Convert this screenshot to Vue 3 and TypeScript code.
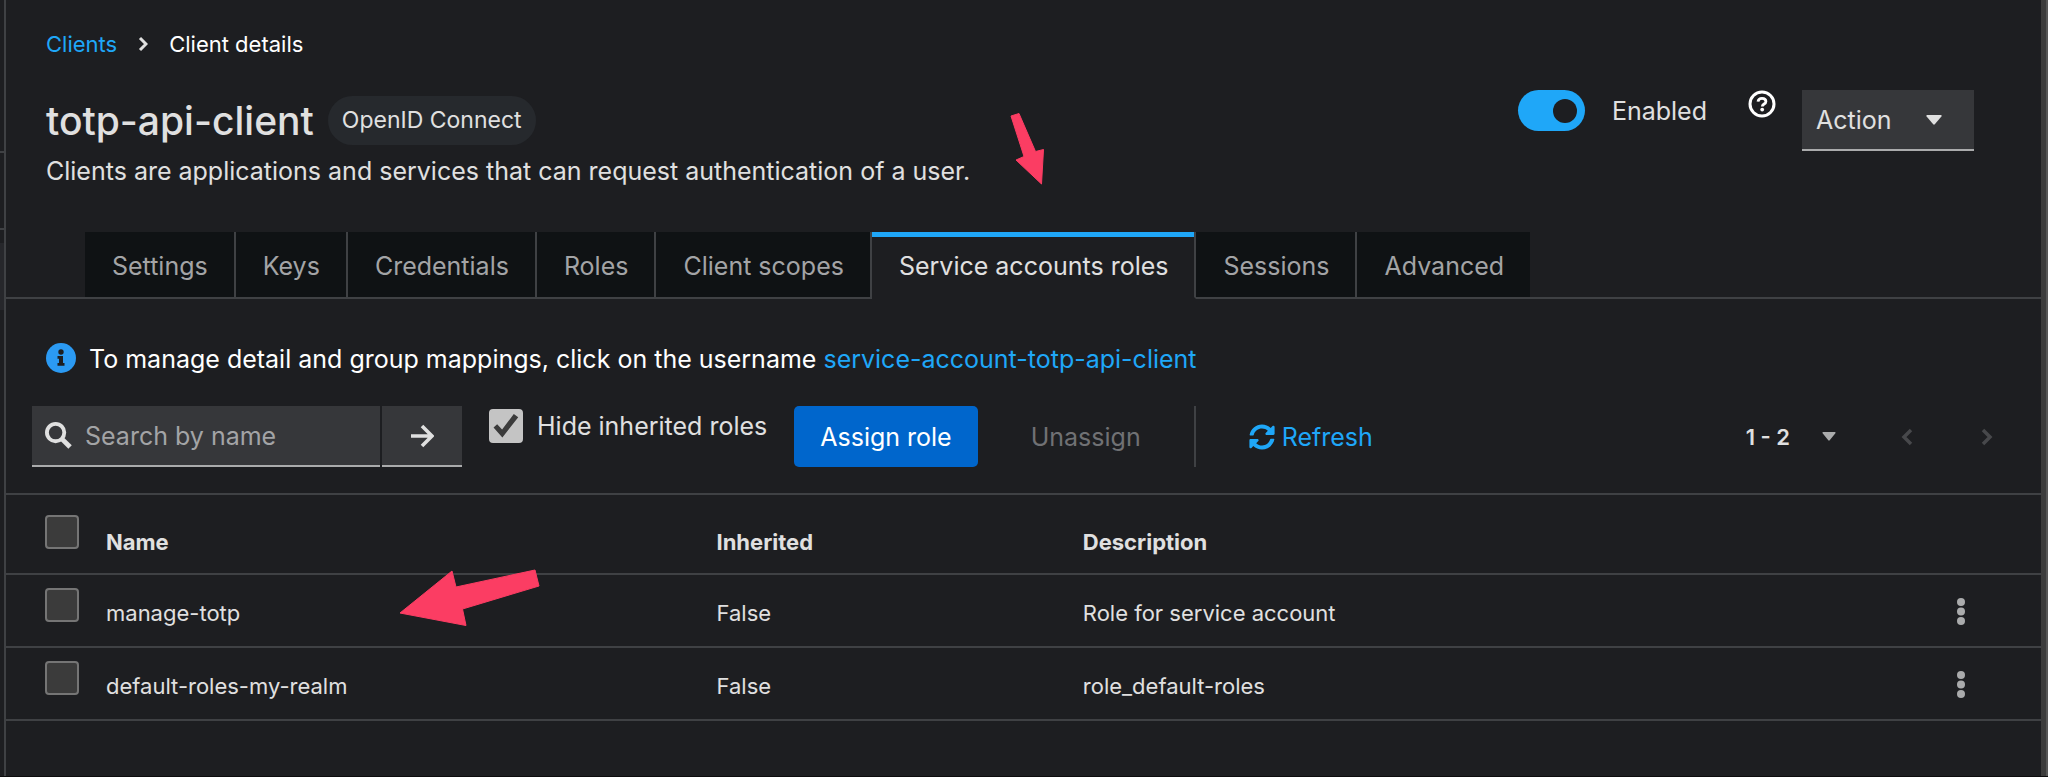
<script setup lang="ts">
import { ref } from 'vue'

interface Role {
  name: string
  inherited: string
  description: string
}

const tabs: string[] = [
  'Settings',
  'Keys',
  'Credentials',
  'Roles',
  'Client scopes',
  'Service accounts roles',
  'Sessions',
  'Advanced',
]
const activeTab = ref('Service accounts roles')
const enabled = ref(true)
const hideInherited = ref(true)
const search = ref('')
const selected = ref<string[]>([])

const roles: Role[] = [
  { name: 'manage-totp', inherited: 'False', description: 'Role for service account' },
  { name: 'default-roles-my-realm', inherited: 'False', description: 'role_default-roles' },
]
</script>

<template>
  <div class="shell">
    <aside class="rail" aria-hidden="true">
      <div class="rail-top"></div>
      <div class="rail-item"></div>
      <div class="rail-current"></div>
    </aside>

    <main class="page">
      <header class="head">
        <div class="intro">
          <nav class="crumbs" aria-label="Breadcrumb">
            <a href="#clients">Clients</a>
            <svg class="crumb-sep" viewBox="0 0 10 16" aria-hidden="true">
              <path d="M2 2l6 6-6 6" fill="none" stroke="currentColor" stroke-width="3" />
            </svg>
            <span>Client details</span>
          </nav>
          <div class="title-row">
            <h1>totp-api-client</h1>
            <span class="pill">OpenID Connect</span>
          </div>
          <p class="lead">Clients are applications and services that can request authentication of a user.</p>
        </div>
        <div class="controls">
          <label class="switch">
            <input v-model="enabled" type="checkbox" role="switch" />
            <span>Enabled</span>
          </label>
          <button class="help" type="button" aria-label="Help">
            <svg viewBox="0 0 28 28" aria-hidden="true">
              <circle cx="14" cy="14" r="12" fill="none" stroke="currentColor" stroke-width="3" />
              <path d="M10 11.6c.3-2.2 1.8-3.3 4-3.3s3.9 1.2 3.9 3.1c0 2.7-3.6 2.5-3.6 5" fill="none" stroke="currentColor" stroke-width="2.8" />
              <circle cx="14.2" cy="19.6" r="1.9" fill="currentColor" />
            </svg>
          </button>
          <button class="action" type="button">
            <span>Action</span>
            <svg class="caret" viewBox="0 0 16 10" aria-hidden="true"><path d="M1 0h14q1 .5.4 1.400L8.800 9.300q-.8.800-1.600 0L.6 1.400Q0 .5 1 0z" fill="currentColor" /></svg>
          </button>
        </div>
      </header>

      <div class="tabs" role="tablist">
        <button
          v-for="tab in tabs"
          :key="tab"
          type="button"
          role="tab"
          class="tab"
          :class="{ active: tab === activeTab }"
          :aria-selected="tab === activeTab"
          @click="activeTab = tab"
        >{{ tab }}</button>
      </div>

      <div class="info">
        <svg viewBox="0 0 30 30" aria-hidden="true">
          <circle cx="15" cy="15" r="15" fill="#2b9af3" />
          <circle cx="15" cy="9" r="2.700" fill="#1d1e21" />
          <path d="M11.500 13h5.500v7h1.500v2.800h-7V20H13v-4.200h-1.500z" fill="#1d1e21" />
        </svg>
        <span>To manage detail and group mappings, click on the username <a href="#user">service-account-totp-api-client</a></span>
      </div>

      <div class="toolbar">
        <form class="search" @submit.prevent>
          <label class="field">
            <svg viewBox="0 0 28 28" aria-hidden="true">
              <circle cx="11" cy="11" r="9" fill="none" stroke="currentColor" stroke-width="4" />
              <path d="M18 18l8 8" stroke="currentColor" stroke-width="5" />
            </svg>
            <input v-model="search" type="text" placeholder="Search by name" aria-label="Search by name" />
          </label>
          <button class="go" type="submit" aria-label="Search">
            <svg viewBox="0 0 24 24" aria-hidden="true">
              <path d="M1 12h20M12 2l10 10-10 10" fill="none" stroke="currentColor" stroke-width="3.600" />
            </svg>
          </button>
        </form>
        <label class="hide">
          <input v-model="hideInherited" class="box" type="checkbox" />
          <span>Hide inherited roles</span>
        </label>
        <button class="btn primary" type="button">Assign role</button>
        <button class="btn muted" type="button" disabled>Unassign</button>
        <span class="divider"></span>
        <button class="btn link" type="button">
          <svg viewBox="0 0 512 512" aria-hidden="true">
            <path
              fill="currentColor"
              d="M370.720 133.280C339.458 104.008 298.888 87.962 255.848 88c-77.458.068-144.328 53.178-162.791 126.850-1.344 5.363-6.122 9.150-11.651 9.150H24.103c-7.498 0-13.194-6.807-11.807-14.176C33.933 94.924 134.813 8 256 8c66.448 0 126.791 26.136 171.315 68.685L463.030 40.970C478.149 25.851 504 36.559 504 57.941V192c0 13.255-10.745 24-24 24H345.941c-21.382 0-32.090-25.851-16.971-40.971l41.750-41.749zM32 296h134.059c21.382 0 32.090 25.851 16.971 40.971l-41.750 41.750c31.262 29.273 71.835 45.319 114.876 45.280 77.418-.070 144.315-53.144 162.787-126.849 1.344-5.363 6.122-9.150 11.651-9.150h57.304c7.498 0 13.194 6.807 11.807 14.176C478.067 417.076 377.187 504 256 504c-66.448 0-126.791-26.136-171.315-68.685L48.970 471.030C33.851 486.149 8 475.441 8 454.059V320c0-13.255 10.745-24 24-24z"
            />
          </svg>
          <span>Refresh</span>
        </button>
        <div class="pager">
          <button class="range" type="button">
            <span>1 - 2</span>
            <svg viewBox="0 0 14 9" aria-hidden="true"><path d="M1 0h12q1 .5.4 1.200L7.700 8.300q-.7.700-1.400 0L.6 1.200Q0 .5 1 0z" fill="currentColor" /></svg>
          </button>
          <button class="step" type="button" aria-label="Previous page" disabled>
            <svg viewBox="0 0 12 18" aria-hidden="true"><path d="M10 2L3 9l7 7" fill="none" stroke="currentColor" stroke-width="3.500" /></svg>
          </button>
          <button class="step" type="button" aria-label="Next page" disabled>
            <svg viewBox="0 0 12 18" aria-hidden="true"><path d="M2 2l7 7-7 7" fill="none" stroke="currentColor" stroke-width="3.500" /></svg>
          </button>
        </div>
      </div>

      <table class="roles">
        <thead>
          <tr>
            <th class="pick"><input class="box" type="checkbox" aria-label="Select all roles" /></th>
            <th class="name">Name</th>
            <th class="inherited">Inherited</th>
            <th>Description</th>
            <th class="menu"></th>
          </tr>
        </thead>
        <tbody>
          <tr v-for="role in roles" :key="role.name">
            <td class="pick"><input v-model="selected" class="box" type="checkbox" :value="role.name" :aria-label="'Select ' + role.name" /></td>
            <td>{{ role.name }}</td>
            <td>{{ role.inherited }}</td>
            <td>{{ role.description }}</td>
            <td class="menu">
              <button type="button" :aria-label="'Actions for ' + role.name">
                <svg viewBox="0 0 8 28" aria-hidden="true" fill="currentColor">
                  <circle cx="4" cy="4" r="4" /><circle cx="4" cy="13.500" r="4" /><circle cx="4" cy="23" r="4" />
                </svg>
              </button>
            </td>
          </tr>
        </tbody>
      </table>

      <svg class="arrow arrow-tab" viewBox="0 0 34 72" aria-hidden="true">
        <path d="M1 3L9 0.500L25.500 38.500L33.500 36.500L31.500 71L6 47L14 43.500Z" />
      </svg>
      <svg class="arrow arrow-row" viewBox="0 0 142 58" aria-hidden="true">
        <path d="M1 44L53 2L57 18L136 1L140 17L63.500 40L67 56.500Z" />
      </svg>
    </main>
    <div class="edge" aria-hidden="true"></div>
  </div>
</template>

<style>
body {
  margin: 0;
  background: #1d1e21;
}
</style>

<style scoped>
.shell {
  display: flex;
  min-height: 100vh;
  box-sizing: border-box;
  border-bottom: 1px solid #0c0c0d;
  background: #1d1e21;
  color: #e0e0e0;
  font: 25px/40px Inter, "Liberation Sans", sans-serif;
}
button,
input {
  font: inherit;
  color: inherit;
  margin: 0;
}
button {
  border: 0;
  padding: 0;
  background: none;
}
svg {
  display: block;
  flex: none;
}
a {
  color: #1fa7f8;
  text-decoration: none;
}
.rail {
  width: 4px;
  flex: none;
  border-right: 2px solid #3f4144;
}
.rail-top {
  height: 151px;
  border-bottom: 2px solid #3f4144;
}
.rail-item {
  height: 75px;
  border-bottom: 2px solid #3f4144;
}
.rail-current {
  height: 67px;
  margin-top: 13px;
  background: #26272b;
}
.edge {
  width: 5px;
  flex: none;
  background: #3c3c3c;
  border-right: 2px solid #575757;
}
.page {
  position: relative;
  flex: 1;
  min-width: 0;
}
.head {
  display: flex;
  justify-content: space-between;
  padding: 28px 67px 0 40px;
}
.crumbs {
  display: flex;
  align-items: center;
  font-size: 22px;
  line-height: 32px;
  color: #fff;
}
.crumb-sep {
  width: 10px;
  height: 16px;
  margin: 0 21px;
  color: #e0e0e0;
}
.title-row {
  display: flex;
  align-items: center;
  gap: 14px;
  margin-top: 36px;
}
h1 {
  margin: 0;
  font-size: 39px;
  line-height: 49px;
  font-weight: 500;
}
.pill {
  padding: 0 14px;
  border-radius: 25px;
  background: #26292d;
  font-size: 23px;
  line-height: 49px;
}
.lead {
  margin: 6px 0 0;
}
.controls {
  display: flex;
  align-items: flex-start;
  padding-top: 62px;
}
.switch {
  display: flex;
  align-items: center;
  gap: 27px;
}
.switch input {
  appearance: none;
  display: flex;
  align-items: center;
  justify-content: flex-end;
  box-sizing: border-box;
  width: 67px;
  height: 41px;
  padding: 8px;
  border-radius: 21px;
  background: #1fa7f8;
}
.switch input::before {
  content: "";
  width: 24px;
  height: 24px;
  border-radius: 50%;
  background: #1d1e21;
}
.switch input:not(:checked) {
  justify-content: flex-start;
  background: #6a6e73;
}
.help {
  margin: 0 26px 0 41px;
  color: #fff;
}
.help svg {
  width: 28px;
  height: 28px;
}
.action {
  display: flex;
  align-items: center;
  justify-content: space-between;
  box-sizing: border-box;
  width: 172px;
  height: 61px;
  padding: 1px 32px 0 14px;
  background: #36373a;
  border-bottom: 2px solid #aaabac;
}
.caret {
  width: 16px;
  height: 10px;
}
.tabs {
  display: flex;
  margin-top: 41px;
  padding-left: 79px;
  box-shadow: inset 0 -2px #3f4144;
}
.tab {
  height: 67px;
  box-sizing: border-box;
  padding: 2px 26px 0 27px;
  border-right: 2px solid #3f4144;
  border-bottom: 2px solid #3f4144;
  background: #0f1214;
  color: #a3a4a6;
}
.tab.active {
  background: #1d1e21;
  color: #e0e0e0;
  border-bottom-color: #1d1e21;
  box-shadow: inset 0 5px #1fa7f8;
}
.tab:last-child {
  border-right: 0;
}
.info {
  display: flex;
  align-items: flex-start;
  gap: 13px;
  margin-top: 40px;
  padding-left: 40px;
  color: #fff;
}
.info svg {
  width: 30px;
  height: 30px;
  margin-top: 4px;
}
.toolbar {
  display: flex;
  gap: 27px;
  padding: 27px 37px 26px 26px;
}
.search {
  display: flex;
  gap: 2px;
}
.field,
.go {
  display: flex;
  align-items: center;
  box-sizing: border-box;
  height: 61px;
  background: #36373a;
  border-bottom: 2px solid #aaabac;
}
.field {
  width: 348px;
  padding: 0 13px;
  gap: 13px;
}
.field svg {
  width: 27px;
  height: 27px;
}
.field input {
  flex: 1;
  min-width: 0;
  border: 0;
  padding: 0;
  background: none;
}
.field input::placeholder {
  color: #a3a4a6;
  opacity: 1;
}
.go {
  width: 80px;
  justify-content: center;
}
.go svg {
  width: 24px;
  height: 24px;
}
.hide {
  display: flex;
  align-self: flex-start;
  align-items: center;
  gap: 14px;
}
.box {
  appearance: none;
  display: grid;
  place-content: center;
  box-sizing: border-box;
  width: 34px;
  height: 34px;
  border: 2px solid #757575;
  border-radius: 4px;
  background: #3b3b3b;
}
.box:checked {
  border-color: #c4c4c4;
  background: #c4c4c4;
}
.box:checked::before {
  content: "";
  width: 26px;
  height: 26px;
  background: #3b3b3b;
  clip-path: polygon(2% 56%, 16% 43%, 35% 63%, 80% 4%, 97% 16%, 36% 94%);
}
.btn {
  height: 61px;
  padding: 0 26px;
  border-radius: 5px;
}
.primary {
  background: #0066cc;
  color: #fff;
}
.muted {
  color: #707174;
}
.divider {
  width: 2px;
  background: #3f4144;
}
.link {
  display: flex;
  align-items: center;
  gap: 7px;
  color: #1fa7f8;
}
.link svg {
  width: 26px;
  height: 26px;
}
.pager {
  display: flex;
  align-items: center;
  margin-left: auto;
}
.range {
  display: flex;
  align-items: center;
  gap: 32px;
  margin-right: 31px;
  font-size: 22px;
  font-weight: 600;
}
.range svg {
  width: 14px;
  height: 9px;
  color: #aaabac;
}
.step {
  display: flex;
  justify-content: center;
  width: 80px;
  color: #47484b;
}
.step + .step {
  width: auto;
  padding: 0 11px 0 34px;
}
.step svg {
  width: 12px;
  height: 18px;
}
.roles {
  width: 100%;
  border-collapse: separate;
  border-spacing: 0;
  table-layout: fixed;
  border-top: 2px solid #3f4144;
  font-size: 22px;
  line-height: 34px;
}
.roles th,
.roles td {
  box-sizing: border-box;
  padding: 21px 0 0;
  height: 73px;
  vertical-align: top;
  text-align: left;
  border-bottom: 2px solid #3f4144;
}
.roles th {
  height: 80px;
  padding-top: 30px;
  font-weight: 700;
}
.roles .pick {
  width: 100px;
  padding: 13px 0 0 39px;
}
.roles th.pick {
  padding-top: 20px;
}
.name {
  width: 30%;
}
.inherited {
  width: 18%;
}
.roles .menu {
  width: 91px;
}
.menu button {
  display: flex;
  align-items: center;
  height: 32px;
  padding: 0 7px;
  color: #aaabac;
}
.menu svg {
  width: 8px;
  height: 28px;
}
.arrow {
  position: absolute;
  fill: #fb3d63;
  stroke: #fb3d63;
  stroke-linejoin: round;
  pointer-events: none;
}
.arrow-tab {
  left: 1004px;
  top: 113px;
  width: 34px;
  height: 72px;
}
.arrow-row {
  left: 393px;
  top: 569px;
  width: 142px;
  height: 58px;
}
</style>
